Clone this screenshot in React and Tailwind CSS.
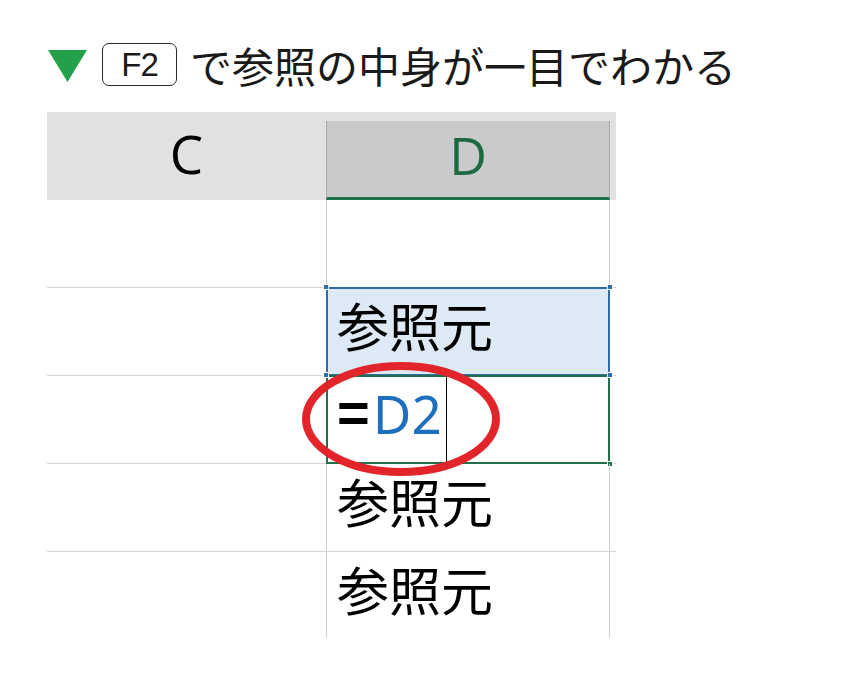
import React from 'react';

const jp = { fontFamily: '"Noto Sans CJK JP", "Noto Sans", sans-serif' };

const Handle = ({ className }) => (
  <span className={`absolute w-[6px] h-[6px] border border-white ${className}`} />
);

const rows = [
  { d: '' },
  { d: '参照元', selected: 'source' },
  { d: 'formula', selected: 'edit' },
  { d: '参照元' },
  { d: '参照元', last: true },
];

const App = () => {
  return (
    <div className="w-[868px] h-[691px] bg-white pt-[43px] pl-[47px]">
      {/* title */}
      <div className="flex items-center h-[43px] pl-[1px]">
        <svg width="39" height="32" viewBox="0 0 39 32" className="mt-[3px]">
          <polygon points="0,0 39,0 19.5,32" fill="#23a14a" />
        </svg>
        <div
          className="ml-[15px] w-[75px] h-[43px] border-[1.5px] border-[#2a2a2a] rounded-[7px] flex items-center justify-center text-[33px] text-[#1a1a1a] tracking-[-1px]"
          style={{ fontFamily: '"Liberation Sans", Arial, sans-serif' }}
        >
          F2
        </div>
        <div className="ml-[13px] text-[42px] leading-none text-[#1a1a1a]" style={jp}>
          で参照の中身が一目でわかる
        </div>
      </div>

      {/* sheet */}
      <div className="relative mt-[26px] w-[569px]">
        <div className="flex h-[88px] bg-[#e1e1e1]" style={{ fontFamily: '"Open Sans", "Noto Sans", sans-serif' }}>
          <div className="w-[279px] flex items-center justify-center text-[53px] text-black pb-[4px]">C</div>
          <div className="w-[284px] mt-[9px] bg-[#c9cacb] border-l border-r border-[#a8a8a8] border-b-[3px] border-b-[#21704a] flex items-center justify-center text-[52px] text-[#1d6a42] pb-[9px]">
            D
          </div>
        </div>

        {rows.map((r, i) => (
          <div
            key={i}
            className={`flex ${r.last ? 'h-[86px]' : 'h-[88px] border-b border-[#d6d6d6]'}`}
          >
            <div className="w-[279px]" />
            <div
              className={`relative w-[284px] border-l border-r border-[#d0d0d0] flex items-center pl-[10px] pb-[13px] text-[52px] leading-none text-black ${
                r.selected === 'source' ? 'bg-[#dde9f5]' : ''
              }`}
              style={jp}
            >
              {r.d === 'formula' ? (
                <>
                  <span
                    className="font-bold text-[56px] text-black mr-[3px]"
                    style={{ fontFamily: '"Liberation Sans", Arial, sans-serif' }}
                  >
                    =
                  </span>
                  <span className="text-[53px] text-[#1f6fbf]" style={{ fontFamily: '"Noto Sans", "Open Sans", sans-serif' }}>D2</span>
                  <span className="absolute left-[119px] top-0 bottom-0 w-[1px] bg-black" />
                </>
              ) : (
                r.d
              )}
              {r.selected === 'source' && (
                <>
                  <span className="absolute -left-[1px] -top-[1px] -right-[1px] -bottom-[1px] border-2 border-[#2e6ea6]" />
                  <Handle className="-left-[4px] -top-[4px] bg-[#2e6ea6]" />
                  <Handle className="-right-[4px] -top-[4px] bg-[#2e6ea6]" />
                </>
              )}
              {r.selected === 'edit' && (
                <>
                  <span className="absolute -left-[1px] -top-[1px] -right-[1px] -bottom-[1px] border-2 border-[#21704a]" />
                  <Handle className="-left-[4px] -top-[4px] bg-[#2e6ea6]" />
                  <Handle className="-right-[4px] -top-[4px] bg-[#2e6ea6]" />
                  <Handle className="-right-[4px] -bottom-[4px] bg-[#21704a]" />
                </>
              )}
            </div>
          </div>
        ))}

        {/* red circle marking the reference */}
        <svg
          className="absolute left-[249px] top-[245px]"
          width="210"
          height="125"
          viewBox="0 0 210 125"
        >
          <ellipse cx="105" cy="62" rx="95" ry="53" fill="none" stroke="#e2242b" strokeWidth="8" />
        </svg>
      </div>
    </div>
  );
};

export default App;
